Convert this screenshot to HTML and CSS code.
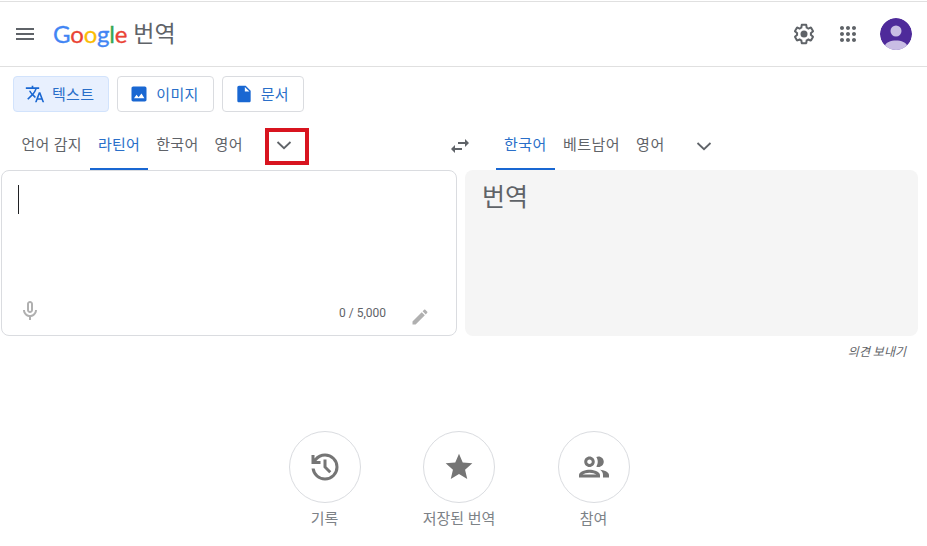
FILE: index.html
```html
<!DOCTYPE html>
<html lang="ko">
<head>
    <meta charset="UTF-8">
    <meta name="viewport" content="width=device-width, initial-scale=1.0">
    <title>Google 번역</title>
    <link rel="stylesheet" href="styles.css">
</head>
<body>
<!-- Header -->
<header class="top-bar">
  <svg class="menu-icon" width="24" height="24" viewBox="0 0 24 24"><path d="M3 18h18v-2H3v2zm0-5h18v-2H3v2zm0-7v2h18V6H3z"/></svg>
  <div class="logo">
    <span class="logo-word"><span class="g-blue">G</span><span class="g-red">o</span><span class="g-yellow">o</span><span class="g-blue">g</span><span class="g-green">l</span><span class="g-red">e</span></span>
    <span class="logo-product">번역</span>
  </div>
  <div class="top-actions">
    <svg class="gear-icon" width="24" height="24" viewBox="0 0 24 24"><path d="M13.85 22.25h-3.7c-.74 0-1.36-.54-1.45-1.27l-.27-1.89c-.27-.14-.53-.29-.79-.46l-1.8.72c-.7.26-1.47-.03-1.81-.65L2.2 15.53c-.35-.66-.2-1.44.36-1.88l1.53-1.19c-.01-.15-.02-.3-.02-.46 0-.15.01-.31.02-.46l-1.52-1.19c-.59-.45-.74-1.26-.37-1.88l1.85-3.19c.34-.62 1.11-.9 1.79-.63l1.81.73c.26-.17.52-.32.78-.46l.27-1.91c.09-.7.71-1.25 1.44-1.25h3.7c.74 0 1.36.54 1.45 1.27l.27 1.89c.27.14.53.29.79.46l1.8-.72c.71-.26 1.48.03 1.82.65l1.84 3.18c.36.66.2 1.44-.36 1.88l-1.52 1.19c.01.15.02.3.02.46s-.01.31-.02.46l1.52 1.19c.56.45.72 1.23.37 1.86l-1.86 3.22c-.34.62-1.11.9-1.8.63l-1.8-.72c-.26.17-.52.32-.78.46l-.27 1.91c-.1.68-.72 1.22-1.46 1.22zm-3.23-2h2.76l.37-2.55.53-.22c.44-.18.88-.44 1.34-.78l.45-.34 2.38.96 1.38-2.4-2.03-1.58.07-.56c.03-.26.06-.51.06-.78s-.03-.53-.06-.78l-.07-.56 2.03-1.58-1.39-2.4-2.39.96-.45-.35c-.42-.32-.87-.58-1.33-.77l-.52-.22-.37-2.55h-2.76l-.37 2.55-.53.21c-.44.19-.88.44-1.34.79l-.45.33-2.38-.95-1.39 2.39 2.03 1.58-.07.56a7 7 0 0 0-.06.79c0 .26.02.53.06.78l.07.56-2.03 1.58 1.38 2.4 2.39-.96.45.35c.43.33.86.58 1.33.77l.53.22.38 2.55z"/><circle cx="12" cy="12" r="3.5"/></svg>
    <svg class="apps-icon" width="24" height="24" viewBox="0 0 24 24"><path d="M6 8c1.1 0 2-.9 2-2s-.9-2-2-2-2 .9-2 2 .9 2 2 2zm6 12c1.1 0 2-.9 2-2s-.9-2-2-2-2 .9-2 2 .9 2 2 2zm-6 0c1.1 0 2-.9 2-2s-.9-2-2-2-2 .9-2 2 .9 2 2 2zm0-6c1.1 0 2-.9 2-2s-.9-2-2-2-2 .9-2 2 .9 2 2 2zm6 0c1.1 0 2-.9 2-2s-.9-2-2-2-2 .9-2 2 .9 2 2 2zm4-8c0 1.1.9 2 2 2s2-.9 2-2-.9-2-2-2-2 .9-2 2zm-4 2c1.1 0 2-.9 2-2s-.9-2-2-2-2 .9-2 2 .9 2 2 2zm6 6c1.1 0 2-.9 2-2s-.9-2-2-2-2 .9-2 2 .9 2 2 2zm0 6c1.1 0 2-.9 2-2s-.9-2-2-2-2 .9-2 2 .9 2 2 2z"/></svg>
    <svg class="avatar" width="32" height="32" viewBox="0 0 32 32"><circle cx="16" cy="16" r="16" fill="#4e2a9a"/><circle cx="16" cy="13" r="5.500" fill="#c9bde4"/><path d="M5 32v-4c0-3.500 6-5.500 11-5.500s11 2 11 5.500v4z" fill="#c9bde4"/></svg>
  </div>
</header>

<!-- Mode buttons -->
<div class="mode-row">
  <button class="mode-btn mode-active">
    <svg width="20" height="20" viewBox="0 0 24 24"><path d="M12.87 15.07l-2.54-2.51.03-.03c1.74-1.94 2.98-4.17 3.71-6.53H17V4h-7V2H8v2H1v1.990h11.170C11.500 7.920 10.440 9.750 9 11.350 8.070 10.320 7.300 9.190 6.690 8h-2c.73 1.630 1.730 3.170 2.980 4.560l-5.090 5.020L4 19l5-5 3.110 3.110.76-2.040zM18.500 10h-2L12 22h2l1.120-3h4.750L21 22h2l-4.500-12zm-2.620 7l1.620-4.330L19.120 17h-3.240z"/></svg>
    <span>텍스트</span>
  </button>
  <button class="mode-btn">
    <svg width="20" height="20" viewBox="0 0 24 24"><path d="M19 3H5c-1.100 0-2 .9-2 2v14c0 1.100.9 2 2 2h14c1.100 0 2-.9 2-2V5c0-1.100-.9-2-2-2zM6 17l3-4 2.500 3 3.500-4.500 3.500 5.500H6z"/></svg>
    <span>이미지</span>
  </button>
  <button class="mode-btn">
    <svg width="20" height="20" viewBox="0 0 24 24"><path d="M14 2H6c-1.100 0-2 .9-2 2v16c0 1.100.9 2 2 2h12c1.100 0 2-.9 2-2V8l-6-6zm-1 7V3.500L18.500 9H13z"/></svg>
    <span>문서</span>
  </button>
</div>

<!-- Language tabs -->
<div class="lang-row">
  <div class="lang-side lang-source">
    <a class="lang-tab">언어 감지</a>
    <a class="lang-tab tab-active">라틴어</a>
    <a class="lang-tab">한국어</a>
    <a class="lang-tab">영어</a>
    <div class="more-box">
      <svg class="chevron" width="24" height="24" viewBox="0 0 24 24"><polyline points="5.500,9 12,15.200 18.500,9"/></svg>
    </div>
  </div>
  <svg class="swap-icon" width="24" height="24" viewBox="0 0 24 24"><path d="M6.990 11 3 15l3.990 4v-3H14v-2H6.990v-3zM21 9l-3.990-4v3H10v2h7.010v3L21 9z"/></svg>
  <div class="lang-side lang-target">
    <a class="lang-tab tab-active">한국어</a>
    <a class="lang-tab">베트남어</a>
    <a class="lang-tab">영어</a>
    <svg class="chevron chevron-target" width="24" height="24" viewBox="0 0 24 24"><polyline points="5.500,9 12,15.200 18.500,9"/></svg>
  </div>
</div>

<!-- Text panels -->
<div class="panels">
  <div class="panel panel-source">
    <div class="caret"></div>
    <div class="panel-foot">
      <svg class="mic-icon" width="24" height="24" viewBox="0 0 24 24"><path d="M12 14c1.660 0 3-1.340 3-3V5c0-1.660-1.340-3-3-3S9 3.340 9 5v6c0 1.660 1.340 3 3 3zm-1-9c0-.55.45-1 1-1s1 .45 1 1v6c0 .55-.45 1-1 1s-1-.45-1-1V5zm6 6c0 2.760-2.240 5-5 5s-5-2.240-5-5H5c0 3.530 2.610 6.430 6 6.920V21h2v-3.080c3.390-.49 6-3.390 6-6.920h-2z"/></svg>
      <span class="char-count">0 / 5,000</span>
      <svg class="pen-icon" width="20" height="20" viewBox="0 0 24 24"><path d="M3 17.250V21h3.750L17.810 9.940l-3.750-3.750L3 17.250zM20.710 7.040c.39-.39.39-1.020 0-1.410l-2.340-2.340c-.39-.39-1.020-.39-1.410 0l-1.830 1.830 3.750 3.750 1.830-1.830z"/></svg>
    </div>
  </div>
  <div class="panel panel-target">번역</div>
</div>
<div class="feedback">의견 보내기</div>

<!-- Bottom shortcuts -->
<div class="shortcuts">
  <div class="shortcut">
    <div class="circle"><svg width="36" height="36" viewBox="0 0 24 24"><path d="M12 21q-3.450 0-6.012-2.287T3.050 13H5.100q.35 2.600 2.313 4.300T12 19q2.925 0 4.963-2.037T19 12q0-2.925-2.037-4.963T12 5q-1.725 0-3.225.8T6.250 8H9v2H3V4h2v2.350q1.275-1.600 3.113-2.475T12 3q3.750 0 6.375 2.625T21 12q0 3.750-2.625 6.375T12 21zm2.800-4.800L11 12.400V7h2v4.600l3.200 3.200-1.400 1.400z"/></svg></div>
    <span class="shortcut-label">기록</span>
  </div>
  <div class="shortcut">
    <div class="circle"><svg width="32" height="32" viewBox="0 0 24 24"><path d="M12 17.270 18.180 21l-1.640-7.030L22 9.240l-7.190-.61L12 2 9.190 8.630 2 9.240l5.460 4.730L5.820 21z"/></svg></div>
    <span class="shortcut-label">저장된 번역</span>
  </div>
  <div class="shortcut">
    <div class="circle"><svg width="36" height="36" viewBox="0 0 24 24"><path d="M9 13.750c-2.340 0-7 1.170-7 3.500V19h14v-1.750c0-2.330-4.660-3.500-7-3.500zM4.340 17c.84-.58 2.870-1.250 4.660-1.250s3.820.67 4.660 1.250H4.340zM9 12c1.930 0 3.500-1.570 3.500-3.500S10.930 5 9 5 5.500 6.570 5.500 8.500 7.070 12 9 12zm0-5c.83 0 1.500.67 1.500 1.500S9.830 10 9 10s-1.500-.67-1.500-1.500S8.170 7 9 7zm7.040 6.810c1.160.84 1.960 1.960 1.960 3.440V19h4v-1.750c0-2.020-3.500-3.170-5.960-3.440zM15 12c1.930 0 3.500-1.570 3.500-3.500S16.930 5 15 5c-.54 0-1.040.13-1.500.35.630.89 1 1.980 1 3.150s-.37 2.260-1 3.150c.46.220.96.350 1.500.350z"/></svg></div>
    <span class="shortcut-label">참여</span>
  </div>
</div>
</body>
</html>
```

FILE: styles.css
```css
/* Page */
body {
    margin: 0;
    background-color: #ffffff;
    font-family: Roboto, "Noto Sans CJK KR", sans-serif;
    color: #5f6368;
    overflow: hidden;
}

/* Header */
.top-bar {
    display: flex;
    align-items: center;
    height: 64px;
    margin-top: 1px;
    border-top: 1px solid #e0e0e0;
    border-bottom: 1px solid #e0e0e0;
    padding: 0 15px 0 13px;
}

.menu-icon {
    fill: #5f6368;
}

.logo {
    display: flex;
    align-items: center;
    margin-left: 16px;
    padding-bottom: 2px;
}

.logo-word {
    font-family: Lato, sans-serif;
    font-size: 24px;
    letter-spacing: -.2px;
    -webkit-text-stroke: .3px;
}

.logo-product {
    font-size: 23px;
    margin-left: 6px;
    padding-bottom: 3px;
}

.g-blue { color: #4285f4; }
.g-red { color: #ea4335; }
.g-yellow { color: #fbbc05; }
.g-green { color: #34a853; }

.top-actions {
    display: flex;
    align-items: center;
    margin-left: auto;
}

.gear-icon, .apps-icon {
    fill: #5f6368;
}

.apps-icon {
    margin-left: 20px;
}

.avatar {
    margin-left: 20px;
    border-radius: 50%;
}

/* Mode buttons */
.mode-row {
    display: flex;
    gap: 8px;
    margin-top: 9px;
    padding-left: 13px;
}

.mode-btn {
    display: flex;
    align-items: center;
    gap: 7px;
    height: 36px;
    padding: 0 14px 2px 11px;
    background-color: #ffffff;
    border: 1px solid #dadce0;
    border-radius: 4px;
    font-family: inherit;
    font-size: 15px;
    letter-spacing: .3px;
    color: #2a6fc9;
}

.mode-btn svg {
    fill: #1967d2;
    margin-top: 2px;
}

.mode-active {
    background-color: #e8f0fe;
    border-color: #d2e3fc;
}

/* Language tabs */
.lang-row {
    display: flex;
    align-items: stretch;
    height: 45px;
    margin-top: 13px;
}

.lang-side {
    display: flex;
    align-items: stretch;
}

.lang-source {
    width: 447px;
    padding-left: 13.500px;
    box-sizing: border-box;
}

.lang-tab {
    display: flex;
    align-items: center;
    box-sizing: border-box;
    height: 45px;
    padding: 0 8px 6px;
    border-bottom: 2px solid transparent;
    font-size: 15px;
    letter-spacing: .5px;
    color: #5f6368;
}

.lang-source .lang-tab {
    letter-spacing: .3px;
}

.tab-active {
    color: #2a6fc9;
    border-bottom-color: #1967d2;
}

.more-box {
    display: flex;
    align-items: center;
    justify-content: center;
    box-sizing: border-box;
    width: 44px;
    height: 37px;
    margin: 3px 0 0 14px;
    padding: 0 6px 3px 0;
    border: 4px solid #d8141f;
}

.chevron {
    flex: none;
    fill: none;
    stroke: #5f6368;
    stroke-width: 1.800;
}

.chevron-target {
    align-self: center;
    margin: 0 0 4px 19px;
}

.swap-icon {
    fill: #5f6368;
    align-self: center;
    margin: 0 24px 4px 1px;
}

/* Text panels */
.panels {
    display: flex;
    gap: 8px;
    padding: 0 9px 0 1px;
}

.panel {
    box-sizing: border-box;
    height: 166px;
    border-radius: 8px;
}

.panel-source {
    width: 456px;
    border: 1px solid #dadce0;
    background-color: #ffffff;
}

.caret {
    width: 1px;
    height: 29px;
    margin: 14px 0 0 16px;
    background-color: #202124;
}

.panel-foot {
    display: flex;
    align-items: flex-start;
    margin-top: 85px;
    padding: 0 26px 0 16px;
}

.mic-icon, .pen-icon {
    fill: #b0b0b0;
}

.pen-icon {
    margin-top: 8px;
}

.char-count {
    margin: 7px 24px 0 auto;
    font-size: 12px;
    line-height: 14px;
}

.panel-target {
    flex: 1;
    padding: 12px 17px;
    background-color: #f5f5f5;
    font-size: 25px;
    line-height: 32px;
}

.feedback {
    margin-top: 9px;
    padding-right: 21px;
    text-align: right;
    font-size: 12px;
    font-style: italic;
    line-height: 15px;
}

/* Bottom shortcuts */
.shortcuts {
    display: flex;
    justify-content: center;
    gap: 42.500px;
    margin-top: 71px;
    padding-right: 9px;
}

.shortcut {
    display: flex;
    flex-direction: column;
    align-items: center;
    width: 92px;
}

.circle {
    display: flex;
    align-items: center;
    justify-content: center;
    box-sizing: border-box;
    width: 72px;
    height: 72px;
    border: 1px solid #dadce0;
    border-radius: 50%;
}

.circle svg {
    fill: #757575;
}

.shortcut-label {
    margin-top: 7px;
    font-size: 15px;
    line-height: 18px;
    white-space: nowrap;
    color: #7d8287;
}
```
